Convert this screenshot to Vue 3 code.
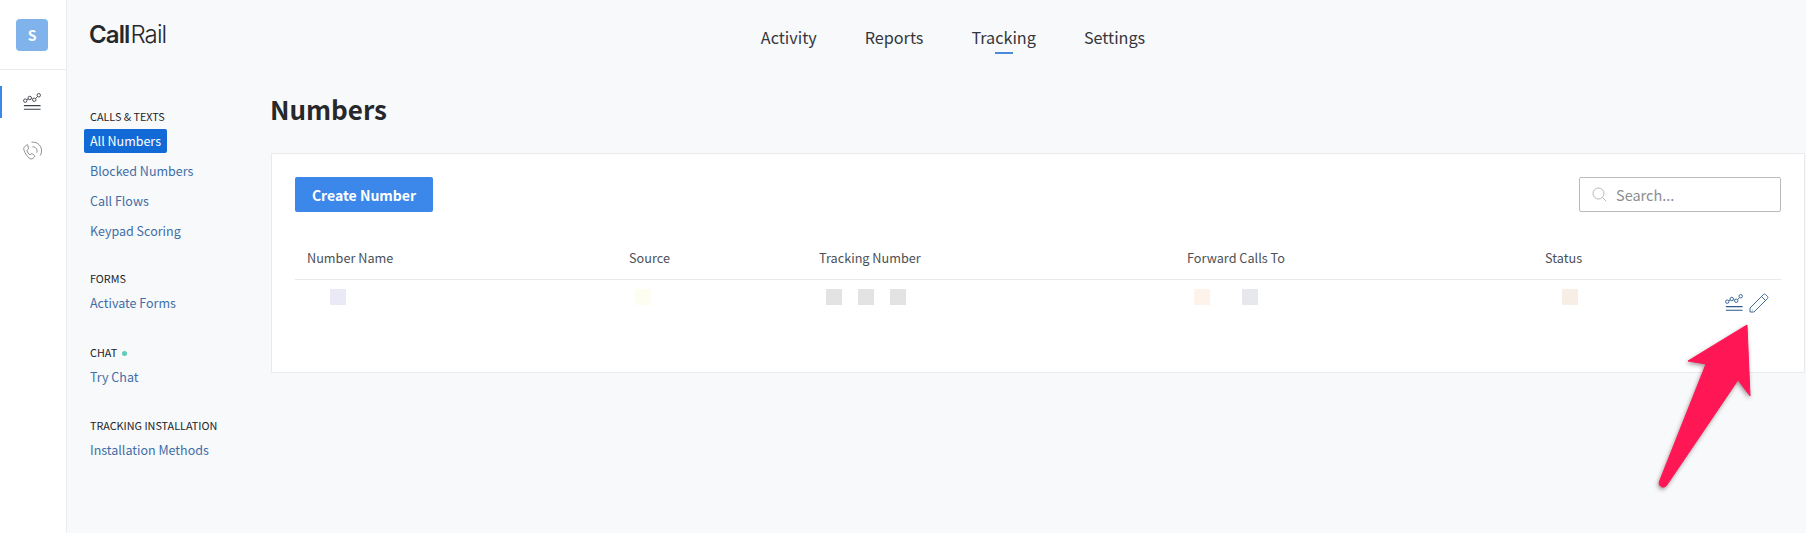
<template>
  <div class="page">
    <aside class="rail">
      <div class="rail-top">
        <div class="avatar">S</div>
      </div>
      <div class="rail-item active">
        <svg width="18" height="18" viewBox="0 0 20 20" fill="none" stroke="#3a3f45" stroke-width="1">
          <circle cx="2.5" cy="8.500" r="1.900" />
          <circle cx="7.500" cy="5.500" r="1.900" />
          <circle cx="12.500" cy="7.500" r="1.900" />
          <circle cx="17.500" cy="2.500" r="1.900" />
          <path d="M4.100 7.500 5.900 6.500M9.300 6.200l1.400.6M14 6.300l2.100-2.400" />
          <path d="M1 14h18.500M1 18h18.500" stroke-width="1.200" />
        </svg>
      </div>
      <div class="rail-item">
        <svg width="20" height="20" viewBox="0 0 20 20" fill="none" stroke="#5c6065" stroke-width="0.7">
          <path d="M4.600 4.100 2.800 5.500c-1.100 1-1.300 2.400-.7 3.900 1 2.900 2.700 5.600 5 7.600 1.300 1.100 2.800 1.300 3.900.3l1.400-1.300c.4-.4.4-.9 0-1.300l-1.900-1.900c-.4-.3-.8-.3-1.200 0l-.9.800c-.3.3-.6.3-.9 0-1.100-1-2-2.400-2.500-3.700-.2-.4-.1-.7.200-.9l.9-.7c.4-.4.4-.8.200-1.200L6 4.200c-.3-.5-.9-.5-1.400-.1Z" />
          <path d="M9.500 1.200c4.800-.6 9.100 2.400 9.900 7 .4 2.300-.1 4.600-1.300 6.400" />
          <path d="M10.500 5.800c2.100-.2 4 1.200 4.500 3.300.2 1 .1 1.800-.2 2.600" />
        </svg>
      </div>
    </aside>

    <div class="main">
      <header class="topbar">
        <div class="logo"><b>Call</b><span>Rail</span></div>
        <nav class="topnav">
          <a v-for="item in navItems" :key="item" :class="{ current: item === 'Tracking' }">{{ item }}</a>
        </nav>
      </header>

      <div class="body">
        <div class="sidenav">
          <section v-for="group in sideGroups" :key="group.title" class="side-group">
            <h5>{{ group.title }}<i v-if="group.dot" class="dot"></i></h5>
            <a v-for="link in group.links" :key="link" :class="{ selected: link === 'All Numbers' }">{{ link }}</a>
          </section>
        </div>

        <div class="content">
          <h1>Numbers</h1>
          <div class="card">
            <div class="toolbar">
              <button class="create">Create Number</button>
              <div class="search">
                <svg width="15" height="15" viewBox="0 0 15 15" fill="none" stroke="#b4b6b8" stroke-width="1">
                  <circle cx="6.500" cy="6.500" r="5.500" />
                  <path d="m10.500 10.500 3.800 3.800" />
                </svg>
                <span>Search...</span>
              </div>
            </div>

            <div class="table">
              <div class="row head">
                <div v-for="col in columns" :key="col">{{ col }}</div>
                <div></div>
              </div>
              <div class="row data">
                <div class="cell name"><i class="blur" style="background: #e9eaf6"></i></div>
                <div class="cell source"><i class="blur" style="background: #fdfdf2"></i></div>
                <div class="cell tracking">
                  <i class="blur" style="background: #e3e3e3"></i>
                  <i class="blur" style="background: #e3e3e3"></i>
                  <i class="blur" style="background: #e3e3e3"></i>
                </div>
                <div class="cell forward">
                  <i class="blur" style="background: #fdf3eb"></i>
                  <i class="blur" style="background: #e6e8ee"></i>
                </div>
                <div class="cell status"><i class="blur" style="background: #f7eee5"></i></div>
                <div class="cell actions">
                  <svg width="18" height="18" viewBox="0 0 20 20" fill="none" stroke="#2c5a8c" stroke-width="1">
                    <circle cx="2.500" cy="8.500" r="1.900" />
                    <circle cx="7.500" cy="5.500" r="1.900" />
                    <circle cx="12.500" cy="7.500" r="1.900" />
                    <circle cx="17.500" cy="2.500" r="1.900" />
                    <path d="M4.100 7.500 5.900 6.500M9.300 6.200l1.400.6M14 6.300l2.100-2.400" />
                    <path d="M1 14h18.500M1 18h18.500" stroke-width="1.200" />
                  </svg>
                  <svg width="20" height="20" viewBox="0 0 20 20" fill="none" stroke="#2c5a8c" stroke-width="0.9">
                    <path d="M1 15 14.500 1.500c.6-.6 1.400-.6 2 0l2 2c.6.6.6 1.400 0 2L5 19H1Z" />
                    <path d="m12.500 3.500 4 4" />
                    <path d="M3 17h.5" />
                  </svg>
                </div>
              </div>
            </div>
          </div>
        </div>
      </div>
    </div>

    <svg class="arrow" width="110" height="180" viewBox="0 0 110 180">
      <path d="M100 5 41 41 59 44 13 160c-1.500 3 -1 5 1 6.500 2 1 4 .8 5.500-1L91 60 103 76Z" fill="#ff1654" stroke="#ff1654" stroke-width="1" stroke-linejoin="round" />
    </svg>
  </div>
</template>

<script setup>
const navItems = ['Activity', 'Reports', 'Tracking', 'Settings']

const sideGroups = [
  { title: 'CALLS & TEXTS', links: ['All Numbers', 'Blocked Numbers', 'Call Flows', 'Keypad Scoring'] },
  { title: 'FORMS', links: ['Activate Forms'] },
  { title: 'CHAT', dot: true, links: ['Try Chat'] },
  { title: 'TRACKING INSTALLATION', links: ['Installation Methods'] }
]

const columns = ['Number Name', 'Source', 'Tracking Number', 'Forward Calls To', 'Status']
</script>

<style>
html,
body {
  margin: 0;
  background: #f8f9fb;
}
</style>

<style scoped>
.page {
  position: relative;
  display: flex;
  width: 1806px;
  height: 533px;
  overflow: hidden;
  background: #f8f9fb;
  font-family: "Noto Sans CJK JP", "Noto Sans", sans-serif;
  color: #2b2d30;
}
.rail {
  flex: 0 0 66px;
  background: #fff;
  border-right: 1px solid #e9ebee;
}
.rail-top {
  height: 70px;
  box-sizing: border-box;
  padding-top: 19px;
  border-bottom: 1px solid #e9ebee;
}
.avatar {
  width: 32px;
  height: 32px;
  margin-left: 16px;
  border-radius: 4px;
  background: #80b3ec;
  color: #fff;
  font-size: 14px;
  font-weight: 700;
  line-height: 32px;
  text-align: center;
}
.rail-item {
  display: flex;
  align-items: center;
  justify-content: center;
  height: 32px;
  margin-bottom: 17px;
  padding-right: 2px;
}
.rail-item:nth-child(2) {
  margin-top: 16px;
}
.rail-item.active {
  box-shadow: inset 2px 0 0 #3b87ea;
}
.main {
  flex: 1;
  min-width: 0;
}
.topbar {
  position: relative;
  display: flex;
  align-items: center;
  justify-content: center;
  height: 74px;
}
.logo {
  position: absolute;
  left: 22px;
  top: 21px;
  font-family: Inter, sans-serif;
  font-size: 24px;
  line-height: 28px;
  letter-spacing: -0.9px;
  color: #26282b;
}
.logo b {
  font-weight: 600;
}
.logo span {
  font-weight: 300;
  margin-left: 1px;
}
.topnav {
  display: flex;
  gap: 48px;
  margin-left: 33px;
  font-size: 16.2px;
  line-height: 24px;
}
.topnav a {
  position: relative;
  color: #34373c;
}
.topnav a.current::after {
  content: "";
  position: absolute;
  left: 0;
  right: 0;
  bottom: -5px;
  width: 18px;
  height: 2px;
  margin: 0 auto;
  background: #4a8ad8;
}
.body {
  display: flex;
}
.sidenav {
  flex: 0 0 204px;
  padding: 34px 0 0 23px;
  box-sizing: border-box;
}
.side-group {
  display: flex;
  flex-direction: column;
  align-items: flex-start;
  margin-bottom: 21px;
}
.side-group:nth-child(2) {
  margin-bottom: 23px;
}
.side-group:nth-child(3) {
  margin-bottom: 22px;
}
.side-group h5 {
  margin: 0 0 5px;
  font-size: 10.8px;
  line-height: 16px;
  font-weight: 400;
  color: #222427;
}
.dot {
  display: inline-block;
  width: 5px;
  height: 5px;
  margin-left: 5px;
  border-radius: 50%;
  background: #5fcdb5;
  vertical-align: 1px;
}
.side-group a {
  font-size: 12.5px;
  line-height: 24px;
  margin-bottom: 6px;
  color: #3f6ea6;
}
.side-group a.selected {
  margin-left: -6px;
  padding: 0 6px;
  border-radius: 2px;
  background: #126ad6;
  color: #fff;
}
.content {
  flex: 1;
  min-width: 0;
}
.content h1 {
  margin: 17px 0 26px -1px;
  font-size: 26px;
  line-height: 36px;
  font-weight: 600;
  color: #26282b;
}
.card {
  height: 220px;
  margin-right: 1px;
  box-sizing: border-box;
  padding: 23px 23px 0;
  background: #fff;
  border: 1px solid #e8eaee;
}
.toolbar {
  display: flex;
  justify-content: space-between;
  align-items: center;
  height: 35px;
}
.create {
  width: 138px;
  height: 35px;
  padding: 0;
  border: 0;
  border-radius: 2px;
  background: #3b87ea;
  color: #fff;
  font: 600 14px/36px "Noto Sans CJK JP", sans-serif;
}
.search {
  display: flex;
  align-items: center;
  gap: 9px;
  width: 202px;
  height: 35px;
  box-sizing: border-box;
  padding-left: 12px;
  border: 1px solid #b9bbbd;
  border-radius: 2px;
  font-size: 14.500px;
  color: #8b8e91;
}
.table {
  margin-top: 24px;
}
.row {
  display: grid;
  grid-template-columns: 322px 190px 368px 358px 1fr 56px;
}
.head {
  height: 44px;
  padding-left: 12px;
  border-bottom: 1px solid #e8eaee;
  box-sizing: border-box;
  font-size: 12.700px;
  line-height: 43px;
  font-weight: 400;
  color: #4c5055;
}
.data {
  padding-left: 12px;
}
.cell {
  display: flex;
  height: 36px;
  padding-top: 9px;
  box-sizing: border-box;
}
.cell.name {
  padding-left: 23px;
}
.cell.source {
  padding-left: 6px;
}
.cell.tracking {
  padding-left: 7px;
  gap: 16px;
}
.cell.forward {
  padding-left: 7px;
  gap: 32px;
}
.cell.status {
  padding-left: 17px;
}
.cell.actions {
  justify-content: flex-end;
  align-items: center;
  align-self: start;
  height: 33px;
  gap: 6px;
  padding-top: 13px;
  padding-right: 12px;
}
.blur {
  display: block;
  width: 16px;
  height: 16px;
}
.arrow {
  position: absolute;
  left: 1647px;
  top: 320px;
  filter: drop-shadow(-1px 2px 2px rgba(60, 30, 40, 0.45));
}
</style>
